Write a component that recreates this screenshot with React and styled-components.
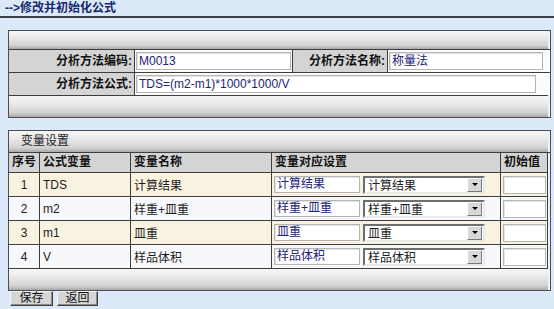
import React from 'react';
import styled, { createGlobalStyle } from 'styled-components';

const GlobalStyle = createGlobalStyle`
    body {
        margin: 0;
        background: #dbe9f9;
        font-family: "Liberation Sans", "Noto Sans CJK SC", sans-serif;
        font-size: 12px;
        color: #111;
    }
`;

const Page = styled.div`
    width: 554px;
    height: 309px;
    overflow: hidden;
`;

const Title = styled.div`
    height: 16px;
    padding-left: 5px;
    line-height: 16px;
    font-weight: bold;
    font-size: 12px;
    color: #172a6e;
    border-bottom: 2px solid #3a3f4a;
`;

const Panel = styled.div`
    margin: ${props => props.top}px 0 0 8px;
    width: 541px;
    border: 1px solid #4a4f57;
    background: #eef3f9;
`;

const Bar = styled.div`
    height: ${props => props.h}px;
    line-height: ${props => props.h}px;
    padding-left: 12px;
    margin-right: 2px;
    color: #222;
    background: linear-gradient(#f6f6f6, #ececec 30%, #d2d2d2 80%, #a9a9a9);
    border-top: ${props => props.line ? '1px solid #3d3d3d' : '0'};
`;

const FormRow = styled.div`
    display: grid;
    grid-template-columns: ${props => props.cols};
    height: 22px;
    border-top: 1px solid #3d3d3d;
    background: #fbfbfb;
`;

const Label = styled.div`
    background: #d4d4d4;
    font-weight: bold;
    text-align: right;
    padding-right: 2px;
    line-height: 22px;
    border-right: 1px solid #3d3d3d;
    border-left: ${props => props.sep ? '1px solid #3d3d3d' : '0'};
`;

const FieldCell = styled.div`
    display: flex;
    align-items: center;
    padding: 0 ${props => props.pr || 4}px 0 1px;
`;

const TextField = styled.input`
    box-sizing: border-box;
    width: ${props => props.w ? props.w + 'px' : '100%'};
    height: ${props => props.h || 18}px;
    border: 1px solid #b5b5b5;
    box-shadow: inset 1px 1px 0 #e3e3e3;
    background: #fff;
    padding: ${props => props.top ? '0 2px 4px' : '0 2px'};
    font-family: "Liberation Sans", "Noto Sans CJK SC", sans-serif;
    font-size: 12px;
    color: #23237a;
    outline: none;
`;

const Grid = styled.div`
    display: grid;
    grid-template-columns: 31px 91px 141px 229px 47px;
    border-top: 1px solid #3d3d3d;
`;

const HeadCell = styled.div`
    height: 19px;
    line-height: 19px;
    padding-left: 3px;
    background: #d4d4d4;
    font-weight: bold;
    border-right: 1px solid #3d3d3d;
    border-bottom: 1px solid #3d3d3d;
`;

const Cell = styled.div`
    display: flex;
    align-items: center;
    justify-content: ${props => props.center ? 'center' : 'flex-start'};
    gap: 3px;
    height: 23px;
    padding-left: ${props => props.pl ?? 3}px;
    background: ${props => props.odd ? '#f8f3e1' : '#f6f8fc'};
    border-right: 1px solid #3d3d3d;
    border-bottom: 1px solid #3d3d3d;
    color: #1d1d1d;
`;

const SelectBox = styled.div`
    box-sizing: border-box;
    display: flex;
    align-items: center;
    width: 122px;
    height: 18px;
    border: 2px solid;
    border-color: #6e6e6e #e9e9e9 #e9e9e9 #6e6e6e;
    background: #fff;
    padding-left: 3px;
`;

const SelectText = styled.span`
    flex: 1;
    color: #1d1d1d;
`;

const Arrow = styled.span`
    display: flex;
    align-items: center;
    justify-content: center;
    width: 13px;
    height: 12px;
    margin-right: 1px;
    background: #d8d8d8;
    border: 1px solid;
    border-color: #fff #777 #777 #fff;
    &::after {
        content: '';
        border-left: 3px solid transparent;
        border-right: 3px solid transparent;
        border-top: 3px solid #000;
    }
`;

const Buttons = styled.div`
    display: flex;
    gap: 4px;
    padding: 0 0 0 10px;
`;

const Button = styled.button`
    width: ${props => props.w}px;
    height: 15px;
    padding: 0;
    font-family: "Liberation Sans", "Noto Sans CJK SC", sans-serif;
    font-size: 12px;
    line-height: 11px;
    color: #111;
    background: #d6d6d6;
    border: 1px solid;
    border-color: #f4f4f4 #3f3f3f #3f3f3f #f4f4f4;
    box-shadow: inset -1px -1px 0 #8a8a8a;
`;

const vars = [
    { no: 1, sym: 'TDS', name: '计算结果' },
    { no: 2, sym: 'm2', name: '样重+皿重' },
    { no: 3, sym: 'm1', name: '皿重' },
    { no: 4, sym: 'V', name: '样品体积' },
];

export default function App() {
    return (
        <Page>
            <GlobalStyle />
            <Title>--&gt;修改并初始化公式</Title>

            <Panel top={12}>
                <Bar h={18} />
                <FormRow cols="126px 157px 96px 1fr">
                    <Label>分析方法编码:</Label>
                    <FieldCell pr={1}><TextField readOnly value="M0013" /></FieldCell>
                    <Label sep>分析方法名称:</Label>
                    <FieldCell pr={7}><TextField readOnly value="称量法" top /></FieldCell>
                </FormRow>
                <FormRow cols="126px 1fr">
                    <Label>分析方法公式:</Label>
                    <FieldCell pr={14}><TextField readOnly value="TDS=(m2-m1)*1000*1000/V" /></FieldCell>
                </FormRow>
                <Bar h={21} line />
            </Panel>

            <Panel top={12}>
                <Bar h={21}>变量设置</Bar>
                <Grid>
                    <HeadCell>序号</HeadCell>
                    <HeadCell>公式变量</HeadCell>
                    <HeadCell>变量名称</HeadCell>
                    <HeadCell>变量对应设置</HeadCell>
                    <HeadCell>初始值</HeadCell>
                    {vars.map(v => (
                        <React.Fragment key={v.no}>
                            <Cell odd={v.no % 2} center pl={0}>{v.no}</Cell>
                            <Cell odd={v.no % 2}>{v.sym}</Cell>
                            <Cell odd={v.no % 2}>{v.name}</Cell>
                            <Cell odd={v.no % 2} pl={2}>
                                <TextField readOnly value={v.name} w={86} h={17} top />
                                <SelectBox>
                                    <SelectText>{v.name}</SelectText>
                                    <Arrow />
                                </SelectBox>
                            </Cell>
                            <Cell odd={v.no % 2} pl={2}>
                                <TextField readOnly value="" w={43} h={18} />
                            </Cell>
                        </React.Fragment>
                    ))}
                </Grid>
                <Bar h={21} />
            </Panel>

            <Buttons>
                <Button w={43}>保存</Button>
                <Button w={41}>返回</Button>
            </Buttons>
        </Page>
    );
}
